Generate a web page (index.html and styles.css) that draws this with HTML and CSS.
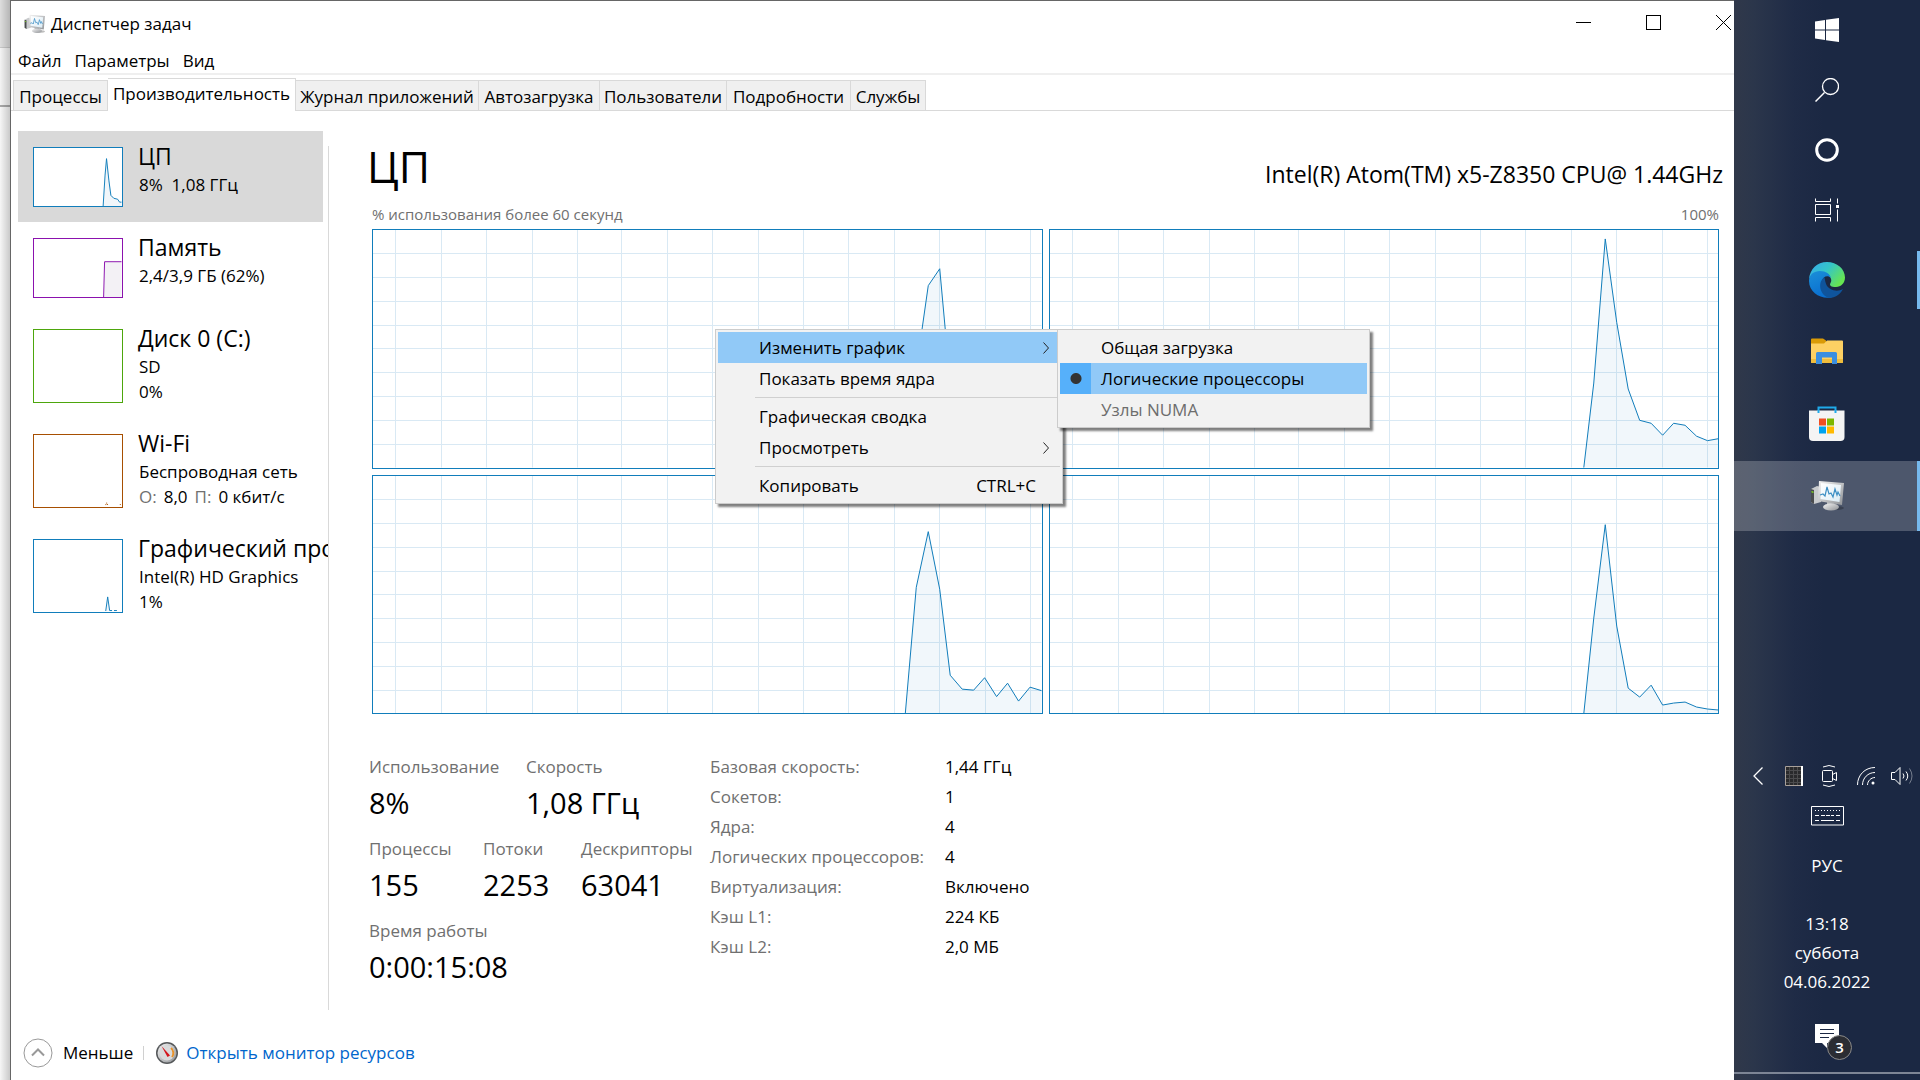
FILE: index.html
```html
<!DOCTYPE html>
<html lang="ru">
<head>
<meta charset="utf-8">
<title>Диспетчер задач</title>
<link rel="stylesheet" href="styles.css">
</head>
<body>
<svg class="defs" aria-hidden="true">
  <defs>
    <linearGradient id="screen" x1="0" y1="0" x2="1" y2="1"><stop offset="0" stop-color="#ffffff"/><stop offset="1" stop-color="#dcecf5"/></linearGradient>
    <linearGradient id="metal" x1="0" y1="0" x2="1" y2="1"><stop offset="0" stop-color="#f4f4f4"/><stop offset="1" stop-color="#8f9296"/></linearGradient>
    <symbol id="monitor" viewBox="0 0 34 32">
      <path d="M1 9l6-3 4 1v15l-7 2-3-2z" fill="#c9cbcd"/>
      <path d="M1 9l3 1v14l-3-2z" fill="#4a4c4e"/>
      <path d="M1.500 11l2 .5v1.500l-2-.5z" fill="#7ed321"/>
      <ellipse cx="25" cy="28" rx="9" ry="2" fill="#000" opacity=".25"/>
      <path d="M17 21h7l1 5h-8z" fill="#b9bcbf"/>
      <ellipse cx="21" cy="27" rx="8" ry="3.500" fill="url(#metal)"/>
      <path d="M9 1l25 2-2 22-24-4z" fill="url(#metal)"/>
      <path d="M11 3l20 2-1.500 17-19-3z" fill="url(#screen)"/>
      <path d="M10 15l3-1 2 2 2-9 2 7 2-1 2 4 2-8 2 6 1-3 2 4" fill="none" stroke="#3d8fc4" stroke-width="1.200"/>
    </symbol>
    <symbol id="grid" viewBox="0 0 670 239" preserveAspectRatio="none">
      <path d="M23 0V239M68.500 0V239M113.500 0V239M159.500 0V239M204.500 0V239M249.500 0V239M295.500 0V239M340.500 0V239M386.500 0V239M431.500 0V239M476.500 0V239M522.500 0V239M567.500 0V239M613.500 0V239M658.500 0V239M0 24H670M0 48H670M0 72H670M0 96H670M0 119.500H670M0 143.500H670M0 167.500H670M0 191.500H670M0 215.500H670" fill="none" stroke="#d9e9f4" shape-rendering="crispEdges"/>
    </symbol>
  </defs>
</svg>

<div class="desktop">
  <div class="behind"></div>

  <main class="window">
    <header class="titlebar">
      <svg class="title-icon" viewBox="0 0 34 32"><use href="#monitor"/></svg>
      <span class="title">Диспетчер задач</span>
      <div class="controls">
        <button type="button" aria-label="Свернуть"><svg viewBox="0 0 15 15"><path d="M0 7.500H15"/></svg></button>
        <button type="button" aria-label="Развернуть"><svg viewBox="0 0 15 15"><path d="M.5.5h14v14h-14z"/></svg></button>
        <button type="button" aria-label="Закрыть"><svg viewBox="0 0 15 15"><path d="M0 0L15 15M15 0L0 15" shape-rendering="auto"/></svg></button>
      </div>
    </header>
    <nav class="menubar">
      <button type="button">Файл</button>
      <button type="button">Параметры</button>
      <button type="button">Вид</button>
    </nav>
    <div class="tabs" role="tablist">
      <button type="button" role="tab">Процессы</button>
      <button type="button" role="tab" aria-selected="true" class="active">Производительность</button>
      <button type="button" role="tab">Журнал приложений</button>
      <button type="button" role="tab">Автозагрузка</button>
      <button type="button" role="tab">Пользователи</button>
      <button type="button" role="tab">Подробности</button>
      <button type="button" role="tab">Службы</button>
    </div>

    <div class="pane">
      <aside class="sidebar">
        <button type="button" class="resource selected">
          <svg class="thumb short blue" viewBox="0 0 90 60"><path class="fill" d="M71 60L73 28 75 11 78 38 80 49 82 52 86 53 88 56H90V60z"/><path d="M71 60L73 28 74.500 11 77 34 79 49 82 52 86 53 88 56H90"/></svg>
          <span class="info"><span class="name">ЦП</span><span class="detail">8%&nbsp; 1,08 ГГц</span></span>
        </button>
        <button type="button" class="resource">
          <svg class="thumb short purple" viewBox="0 0 90 60"><path class="fill" d="M71.500 60L72.500 23.500H90V60z"/><path d="M71.500 60L72.500 23.500H90"/></svg>
          <span class="info"><span class="name">Память</span><span class="detail">2,4/3,9 ГБ (62%)</span></span>
        </button>
        <button type="button" class="resource">
          <svg class="thumb green" viewBox="0 0 90 74"></svg>
          <span class="info"><span class="name">Диск 0 (C:)</span><span class="detail">SD</span><span class="detail">0%</span></span>
        </button>
        <button type="button" class="resource">
          <svg class="thumb orange" viewBox="0 0 90 74"><path d="M73.500 72l.5-2h1l.5 2M88.500 72v-2" stroke-dasharray="1 1"/></svg>
          <span class="info"><span class="name">Wi-Fi</span><span class="detail">Беспроводная сеть</span><span class="detail rates"><i>О:</i><span>8,0</span><i>П:</i><span>0 кбит/с</span></span></span>
        </button>
        <button type="button" class="resource">
          <svg class="thumb blue" viewBox="0 0 90 74"><path class="fill" d="M74 73l1.500-14L78 73z"/><path d="M73.500 73l2-14.500 2 14H80M82 72.500h3"/></svg>
          <span class="info"><span class="name">Графический процессор 0</span><span class="detail">Intel(R) HD Graphics</span><span class="detail">1%</span></span>
        </button>
      </aside>

      <section class="content">
        <div class="heading"><h1>ЦП</h1><h2>Intel(R) Atom(TM) x5-Z8350 CPU@ 1.44GHz</h2></div>
        <div class="axis"><span>% использования более 60 секунд</span><span>100%</span></div>
        <div class="charts">
          <svg class="chart" viewBox="0 0 670 239" preserveAspectRatio="none"><use href="#grid"/><path class="fill" d="M534 239L545 137 556.500 56 568 39 579 160 590 205 602 212 613 206 625 214 636 204 647 213 658 210 670 212V239z"/><path class="line" d="M534 239L545 137 556.500 56 568 39 579 160 590 205 602 212 613 206 625 214 636 204 647 213 658 210 670 212"/></svg>
          <svg class="chart" viewBox="0 0 670 239" preserveAspectRatio="none"><use href="#grid"/><path class="fill" d="M535 239L545 154 556.500 9 568 93 579.500 160 591 191.500 602.500 194.500 614 206.500 625 194.500 636.500 196.500 648 207.500 659 212 670 210V239z"/><path class="line" d="M535 239L545 154 556.500 9 568 93 579.500 160 591 191.500 602.500 194.500 614 206.500 625 194.500 636.500 196.500 648 207.500 659 212 670 210"/></svg>
          <svg class="chart" viewBox="0 0 670 239" preserveAspectRatio="none"><use href="#grid"/><path class="fill" d="M533.500 239L544.500 112 556.500 56 568 114 578.500 200.500 590.500 214.500 602 215.500 613 203 625 222 636 208.500 647 226.500 658.500 212.500 670 216V239z"/><path class="line" d="M533.500 239L544.500 112 556.500 56 568 114 578.500 200.500 590.500 214.500 602 215.500 613 203 625 222 636 208.500 647 226.500 658.500 212.500 670 216"/></svg>
          <svg class="chart" viewBox="0 0 670 239" preserveAspectRatio="none"><use href="#grid"/><path class="fill" d="M535 239L545 143 556.500 49 568 151 579.500 213.500 591 222.500 602.500 210.500 614 230.500 625 228.500 636.500 227.500 648 232.500 659 234.500 670 235.500V239z"/><path class="line" d="M535 239L545 143 556.500 49 568 151 579.500 213.500 591 222.500 602.500 210.500 614 230.500 625 228.500 636.500 227.500 648 232.500 659 234.500 670 235.500"/></svg>

          <div class="menu context" role="menu">
            <button type="button" role="menuitem" class="hover"><span>Изменить график</span><svg class="arrow" viewBox="0 0 6 12"><path d="M.5.5L5.500 6 .5 11.500"/></svg></button>
            <button type="button" role="menuitem"><span>Показать время ядра</span></button>
            <hr>
            <button type="button" role="menuitem"><span>Графическая сводка</span></button>
            <button type="button" role="menuitem"><span>Просмотреть</span><svg class="arrow" viewBox="0 0 6 12"><path d="M.5.5L5.500 6 .5 11.500"/></svg></button>
            <hr>
            <button type="button" role="menuitem"><span>Копировать</span><span class="shortcut">CTRL+C</span></button>
            <div class="menu submenu" role="menu">
              <button type="button" role="menuitemradio"><span>Общая загрузка</span></button>
              <button type="button" role="menuitemradio" aria-checked="true" class="hover checked"><span>Логические процессоры</span></button>
              <button type="button" role="menuitemradio" disabled><span>Узлы NUMA</span></button>
            </div>
          </div>
        </div>

        <div class="stats">
          <div class="figures">
            <dl><div class="w-usage"><dt>Использование</dt><dd>8%</dd></div><div><dt>Скорость</dt><dd>1,08 ГГц</dd></div></dl>
            <dl><div class="w-proc"><dt>Процессы</dt><dd>155</dd></div><div class="w-thr"><dt>Потоки</dt><dd>2253</dd></div><div><dt>Дескрипторы</dt><dd>63041</dd></div></dl>
            <dl><div><dt>Время работы</dt><dd>0:00:15:08</dd></div></dl>
          </div>
          <table class="specs">
            <tr><th scope="row">Базовая скорость:</th><td>1,44 ГГц</td></tr>
            <tr><th scope="row">Сокетов:</th><td>1</td></tr>
            <tr><th scope="row">Ядра:</th><td>4</td></tr>
            <tr><th scope="row">Логических процессоров:</th><td>4</td></tr>
            <tr><th scope="row">Виртуализация:</th><td>Включено</td></tr>
            <tr><th scope="row">Кэш L1:</th><td>224 КБ</td></tr>
            <tr><th scope="row">Кэш L2:</th><td>2,0 МБ</td></tr>
          </table>
        </div>
      </section>
    </div>

    <footer class="footer">
      <button type="button" class="less"><svg viewBox="0 0 30 30"><circle cx="15" cy="15" r="14"/><path d="M9 17.500L15 11.500 21 17.500" stroke-width="2"/></svg>Меньше</button>
      <a href="#" class="monitor-link">
        <svg viewBox="0 0 24 24"><circle cx="12" cy="12" r="11" fill="#55585a"/><circle cx="12" cy="12" r="9.500" fill="url(#metal)"/><circle cx="12" cy="12" r="7.500" fill="#d9dadb"/><path d="M16 7a6.500 6.500 0 0 1 1 9" fill="none" stroke="#e8922a" stroke-width="2"/><path d="M6.500 5L15 14.500 12.500 16z" fill="#d4141c"/></svg>
        Открыть монитор ресурсов</a>
    </footer>
  </main>

  <aside class="taskbar">
    <button type="button" class="sys" aria-label="Пуск"><svg width="24" height="24" viewBox="0 0 24 24"><path fill="#fff" d="M0 3.500L10 2v9.500H0zM11 1.800L24 0v11.500H11zM0 12.500h10V22L0 20.500zM11 12.500h13V24L11 22.200z"/></svg></button>
    <button type="button" class="sys" aria-label="Поиск"><svg class="stroke" width="24" height="24" viewBox="0 0 24 24"><circle cx="15.500" cy="8.500" r="8" stroke-width="1.300"/><path d="M9.500 14.500L.5 23.500" stroke-width="1.500"/></svg></button>
    <button type="button" class="sys" aria-label="Кортана"><svg width="24" height="24" viewBox="0 0 24 24"><circle cx="12" cy="12" r="10.300" fill="none" stroke="#fff" stroke-width="3"/></svg></button>
    <button type="button" class="sys" aria-label="Представление задач"><svg class="stroke" width="24" height="24" viewBox="0 0 24 24"><path d="M.5.5v3h15v-3M.5 6.500h15v10h-15zM.5 23.500v-4h15v4M22.500.5v5M22.500 11.500v12"/><path d="M21 7h3v3h-3z" fill="#fff" stroke="none"/></svg></button>
    <div class="apps">
      <button type="button" class="app running edge" aria-label="Edge"><svg width="36" height="36" viewBox="0 0 36 36">
        <defs><linearGradient id="e1" x1="0" y1="0" x2="1" y2=".6"><stop offset="0" stop-color="#35a8ef"/><stop offset=".5" stop-color="#35c5c8"/><stop offset="1" stop-color="#66e551"/></linearGradient><linearGradient id="e2" x1="0" y1="0" x2=".4" y2="1"><stop offset="0" stop-color="#1b8fd8"/><stop offset="1" stop-color="#0a6fd0"/></linearGradient></defs>
        <path fill="url(#e1)" d="M0 17C1 7 8 0 18 0c10 0 18 7 18 15.500C36 21 32 25 27 25c-5 0-7-1.500-5.500-4 2-3 0-8-6-9C9 10.500 2 13 0 17z"/>
        <path fill="url(#e2)" d="M0 19C0 12.500 5 9 11 9c6 0 10 3 11 7-3-3-8-2-9 3-1.500 8 4 14 10 16.200C13 38 0 31 0 19z"/>
        <path fill="#0f549c" d="M15.500 15.500C8.500 19 10 33 20 35.800c6 .2 11-3.300 14-8.800-6 3.500-14 1-16.500-4-1-2-1.500-5-2-7.500z"/></svg></button>
      <button type="button" class="app" aria-label="Проводник"><svg width="32" height="28" viewBox="0 0 32 28"><path fill="#d99a06" d="M0 1.500Q0 .5 1 .5h11l3 2v5H0z"/><path fill="#fdd063" d="M0 5.500h13l3-3h15q1 0 1 1V24q0 1-1 1H1q-1 0-1-1z"/><path fill="#f0bd3c" d="M0 21h32v3q0 1-1 1H1q-1 0-1-1z"/><path fill="#3a8ee0" d="M5 15.500q0-1.500 1.500-1.500h18q1.500 0 1.500 1.500V26h-5v-6.500H11V26H5z"/></svg></button>
      <button type="button" class="app" aria-label="Microsoft Store"><svg width="36" height="36" viewBox="0 0 36 36"><path d="M9.500 7V1.500h17V7" fill="none" stroke="#1fa9ea" stroke-width="2"/><path fill="#f4f4f4" d="M0 4.500h35.500V31q0 4-4 4H4q-4 0-4-4z"/><path d="M9.500 4v3M26.500 4v3" stroke="#1fa9ea" stroke-width="2"/><path fill="#f04e23" d="M10 12.500h7v7h-7z"/><path fill="#7db700" d="M18 12.500h7v7h-7z"/><path fill="#00a3ee" d="M10 20.500h7v7h-7z"/><path fill="#ffb900" d="M18 20.500h7v7h-7z"/></svg></button>
      <button type="button" class="app running current" aria-label="Диспетчер задач"><svg width="34" height="32" viewBox="0 0 34 32"><use href="#monitor"/></svg></button>
    </div>

    <div class="tray">
      <div class="tray-icons">
        <svg class="stroke" width="10" height="18" viewBox="0 0 10 18"><path d="M9.500.5L1 9l8.500 8.500" stroke-width="1.300"/></svg>
        <svg width="18" height="20" viewBox="0 0 18 20"><path d="M0 0h18v20H0z" fill="#2a2a2c"/><path d="M4.500 0v20M8.500 0v20M12.500 0v20M0 4.500h18M0 8.500h18M0 12.500h18M0 16.500h18" stroke="#4c4c4e"/><path d="M.5.500h17v19H.5z" fill="none" stroke="#a8a09a"/><path d="M17 0v20" stroke="#fff" stroke-width="2"/></svg>
        <svg class="stroke" width="18" height="22" viewBox="0 0 18 22"><rect x="1.500" y="5.500" width="10" height="11" rx="1"/><path d="M11.500 9.500l4-2v8l-4-2M2 2q6-3 12 0M2 20q6 3 12 0"/></svg>
        <svg class="stroke" width="18" height="18" viewBox="0 0 18 18"><path d="M.5 18C.5 8 8 .5 18 .5M5.500 18C5.500 11 11 5.500 18 5.500M10.500 18c0-4 3.500-7.500 7.500-7.500"/><circle cx="16" cy="16" r="1.500" fill="#fff" stroke="none"/></svg>
        <svg class="stroke" width="22" height="18" viewBox="0 0 22 18"><path d="M.5 5.500h3.500l5-5v17l-5-5H.5zM12 6.500q2 2.500 0 5M15 4.500q3.500 4.500 0 9"/><path d="M18.500 1.500q5 7.500 0 15" opacity=".4"/></svg>
      </div>
      <svg class="stroke keyboard" width="33" height="20" viewBox="0 0 33 20"><path d="M.5.5h32v18.500H.5z"/><path d="M4 4.500h25" stroke-dasharray="1 2"/><path d="M4 9.500h4M10 9.500h13M25 9.500h4" stroke-dasharray="4 1"/><path d="M4 14.500h4M10 14.500h13M25 14.500h4"/></svg>
      <button type="button" class="lang">РУС</button>
      <div class="clock"><span>13:18</span><span>суббота</span><span>04.06.2022</span></div>
      <button type="button" class="notify" aria-label="Уведомления"><svg width="24" height="24" viewBox="0 0 24 24"><path fill="#fff" d="M0 0h24v19H12v5l-5-5H0z"/><path d="M5 5.500h14M5 9.500h14M5 13.500h9" stroke="#1b2843"/></svg><span class="badge">3</span></button>
    </div>
  </aside>
</div>
</body>
</html>
```
FILE: styles.css
```css
* { box-sizing: border-box; }
body {
  margin: 0;
  font: 17px/24px "Open Sans", "Noto Sans", sans-serif;
  color: #000;
  background: #fff;
}
button {
  font: inherit;
  color: inherit;
  background: none;
  border: 0;
  padding: 0;
  text-align: left;
}
h1, h2, dl, dd, dt { margin: 0; font-weight: 400; }
svg { display: block; flex: none; }
.defs { position: absolute; width: 0; height: 0; }

.desktop {
  display: grid;
  grid-template-columns: 10px minmax(0, 1fr) 186px;
  min-height: 100vh;
}
.behind {
  background:
    linear-gradient(90deg, transparent, rgba(0, 0, 0, .18)),
    linear-gradient(#dedede 47px, #c8c8c8 47px 48px, #f4f4f4 48px 105px, #a8a8a8 105px 107px, #f6f6f6 107px);
}

/* Window */
.window {
  display: flex;
  flex-direction: column;
  overflow: hidden;
  background: #fff;
  border-top: 1px solid #666;
  border-left: 1px solid #666;
}
.titlebar { display: flex; height: 44px; padding-left: 13px; }
.title-icon { width: 21px; height: 20px; margin-top: 13px; }
.title { margin: 11px auto 0 6px; }
.controls { display: flex; margin-right: -24px; }
.controls button { width: 70px; display: flex; justify-content: center; padding-top: 14px; height: 44px; }
.controls svg { width: 15px; height: 15px; fill: none; stroke: #000; shape-rendering: crispEdges; }
.menubar {
  display: flex;
  gap: 13px;
  height: 30px;
  padding: 4px 7px 0;
  border-bottom: 2px solid #efefef;
}
.tabs {
  display: grid;
  grid-template-columns: 95px 188px 183px 121px 127px 124px 75px;
  align-items: end;
  height: 36px;
  padding-left: 2px;
  border-bottom: 1px solid #d9d9d9;
  white-space: nowrap;
}
.tabs button {
  height: 30px;
  padding-top: 2px;
  text-align: center;
  background: #f0f0f0;
  border: 1px solid #d9d9d9;
  border-width: 1px 1px 0 0;
}
.tabs button:first-child { border-left-width: 1px; }
.tabs .active {
  height: 33px;
  margin-bottom: -1px;
  padding-bottom: 4px;
  background: #fff;
}

/* Pane */
.pane { flex: 1; display: flex; padding: 20px 12px 16px 7px; }
.sidebar {
  flex: none;
  width: 311px;
  display: flex;
  flex-direction: column;
  align-items: flex-start;
  overflow: hidden;
  background: linear-gradient(#d9d9d9, #d9d9d9) right 0 top 15px / 1px 100% no-repeat;
}
.resource { display: flex; width: 310px; height: 105px; padding: 16px 0 0 15px; gap: 15px; overflow: hidden; }
.resource.selected { width: 305px; background: #d9d9d9; }
.resource:nth-child(-n+2) { height: 91px; }
.thumb { width: 90px; height: 74px; background: #fff; border: 1px solid; fill: none; stroke: currentColor; }
.thumb.short { height: 60px; }
.thumb .fill { fill: #f1f6fa; stroke: none; }
.thumb.purple .fill { fill: #f3f1f5; }
.blue { color: #117dbb; }
.purple { color: #8b12ae; }
.green { color: #4da60c; }
.orange { color: #a74f01; }
.info { display: flex; flex-direction: column; white-space: nowrap; margin-top: -7px; }
.name { font-size: 23px; line-height: 32px; }
.detail { line-height: 25px; padding-left: 1px; }
.detail i { font-style: normal; color: #707070; }
.rates { display: flex; gap: 7px; }

.content { flex: 1; min-width: 0; display: flex; flex-direction: column; padding: 0 3px 0 43px; }
.heading { display: flex; justify-content: space-between; align-items: baseline; margin: 6px -4px 0 -5px; }
.heading h1 { font-size: 43px; line-height: 60px; }
.heading h2 { font-size: 23px; line-height: 32px; }
.axis { display: flex; justify-content: space-between; font-size: 15px; line-height: 24px; color: #707070; margin: 5px 0 3px; }
.charts {
  position: relative;
  flex: 1;
  display: grid;
  grid-template: minmax(160px, 1fr) minmax(160px, 1fr) / 1fr 1fr;
  gap: 6px;
}
.chart { width: 100%; height: 0; min-height: 100%; border: 1px solid #117dbb; }
.chart .fill { fill: #117dbb; fill-opacity: .06; }
.chart .line { fill: none; stroke: #117dbb; vector-effect: non-scaling-stroke; }

/* Context menu */
.menu {
  position: absolute;
  padding: 2px;
  background: #f2f2f2;
  border: 1px solid #ccc;
  box-shadow: 3px 3px 2px rgba(0, 0, 0, .5);
}
.context { left: 343px; top: 100px; width: 348px; }
.submenu { left: 341px; top: -1px; width: 313px; }
.menu button { display: flex; align-items: center; justify-content: space-between; width: 100%; height: 31px; padding: 1px 6px 0 41px; }
.menu .hover { background: #91c9f7; }
.menu button:disabled { color: #6d6d6d; }
.menu hr { height: 1px; margin: 3px 0 3px 37px; border: 0; background: #d0d0d0; }
.menu .shortcut { margin-right: 18px; }
.arrow { width: 6px; height: 12px; margin-right: 5px; fill: none; stroke: #222; }
.menu .checked { background: radial-gradient(circle at 16px 50%, #333 5px, transparent 6px), linear-gradient(90deg, #56b0fa 31px, #91c9f7 31px); }

/* Stats */
.stats { display: flex; margin: 38px 0 0 -3px; height: 258px; }
.figures { width: 341px; }
.figures dl { display: flex; height: 82px; }
.figures dt, .specs th { color: #707070; }
.figures dt { line-height: 30px; }
.figures dd { font-size: 29px; line-height: 42px; }
.w-usage { width: 157px; }
.w-proc { width: 114px; }
.w-thr { width: 98px; }
.specs { border-collapse: collapse; align-self: flex-start; }
.specs th { width: 235px; }
.specs th, .specs td { padding: 0; font-weight: 400; text-align: left; height: 30px; line-height: 30px; white-space: nowrap; }

/* Footer */
.footer { display: flex; align-items: center; height: 54px; padding-left: 12px; }
.less { display: flex; align-items: center; gap: 10px; height: 30px; }
.less svg { width: 30px; height: 30px; fill: none; stroke: #999; }
.monitor-link {
  display: flex;
  align-items: center;
  gap: 7px;
  margin-left: 10px;
  padding-left: 12px;
  color: #0066cc;
  text-decoration: none;
  background: linear-gradient(#d0d0d0, #d0d0d0) left center / 1px 14px no-repeat;
}
.monitor-link svg { width: 24px; height: 24px; }

/* Taskbar */
.taskbar {
  display: flex;
  flex-direction: column;
  color: #fff;
  background: linear-gradient(90deg, #30384a, #2b364b 20px, #1f2b46 60px, #1b2843 90px);
}
.taskbar button { display: flex; align-items: center; justify-content: center; }
.stroke { fill: none; stroke: #fff; }
.sys { height: 60px; }
.apps { display: grid; gap: 2px; margin-top: 5px; }
.app { height: 70px; }
.running { box-shadow: inset -3px 0 #76b9ed; }
.edge { height: 58px; margin: 6px 0; }
.current { background: rgba(255, 255, 255, .22); }
.tray { margin-top: auto; display: flex; flex-direction: column; align-items: center; border-bottom: 2px solid #7d8595; margin-bottom: 6px; }
.tray-icons {
  align-self: stretch;
  display: grid;
  grid-template-columns: repeat(5, 36px);
  place-items: center;
  height: 22px;
  padding-left: 6px;
}
.keyboard { margin-top: 19px; }
.lang { margin-top: 28px; height: 24px; }
.clock { display: flex; flex-direction: column; align-items: center; line-height: 29px; margin-top: 31px; }
.notify { position: relative; margin: 28px 0 24px; }
.badge {
  position: absolute;
  left: 12px;
  top: 11px;
  width: 25px;
  height: 25px;
  border: 1px solid #8a8a8a;
  border-radius: 50%;
  background: #2b2d33;
  font-weight: 600;
  font-size: 15px;
  line-height: 22px;
  text-align: center;
}
```
